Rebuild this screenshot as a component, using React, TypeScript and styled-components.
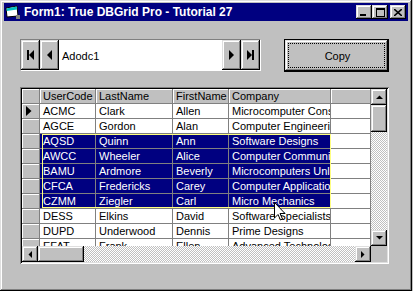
import styled, { createGlobalStyle, css } from "styled-components";

const GlobalStyle = createGlobalStyle`
    html, body {
        margin: 0;
        padding: 0;
        background: #c0c0c0;
    }

    body {
        font-family: "Liberation Sans", Arial, sans-serif;
        font-size: 11px;
        color: #000;
    }
`

interface Customer {
    code: string
    last: string
    first: string
    company: string
}

const customers: Customer[] = [
    { code: "ACMC", last: "Clark", first: "Allen", company: "Microcomputer Consultants" },
    { code: "AGCE", last: "Gordon", first: "Alan", company: "Computer Engineering" },
    { code: "AQSD", last: "Quinn", first: "Ann", company: "Software Designs" },
    { code: "AWCC", last: "Wheeler", first: "Alice", company: "Computer Communications" },
    { code: "BAMU", last: "Ardmore", first: "Beverly", company: "Microcomputers Unlimited" },
    { code: "CFCA", last: "Fredericks", first: "Carey", company: "Computer Applications" },
    { code: "CZMM", last: "Ziegler", first: "Carl", company: "Micro Mechanics" },
    { code: "DESS", last: "Elkins", first: "David", company: "Software Specialists" },
    { code: "DUPD", last: "Underwood", first: "Dennis", company: "Prime Designs" },
    { code: "EFAT", last: "Frank", first: "Ellen", company: "Advanced Technologies" },
];

const columns = ["UserCode", "LastName", "FirstName", "Company"];

// rows 2..6 are the selected block
const isSelected = (index: number) => index >= 2 && index <= 6;

type Direction = "up" | "down" | "left" | "right";

function Arrow({ dir }: { dir: Direction }) {
    const vertical = dir === "up" || dir === "down";
    const points = {
        up: "0,4 7,4 3.5,0.5",
        down: "0,0 7,0 3.5,3.5",
        left: "4,0 4,7 0.5,3.5",
        right: "0,0 0,7 3.5,3.5",
    }[dir];

    return (
        <svg width={vertical ? 7 : 4} height={vertical ? 4 : 7} viewBox={vertical ? "0 0 7 4" : "0 0 4 7"}>
            <polygon points={points} fill="#000" />
        </svg>
    );
}

function NavGlyph({ kind }: { kind: "first" | "prev" | "next" | "last" }) {
    return (
        <svg width="9" height="10" viewBox="0 0 9 10">
            {kind === "first" && <><rect x="1" y="0" width="2" height="10" fill="#000" /><polygon points="8,0 8,10 3,5" fill="#000" /></>}
            {kind === "prev" && <polygon points="7,0 7,10 2,5" fill="#000" />}
            {kind === "next" && <polygon points="2,0 2,10 7,5" fill="#000" />}
            {kind === "last" && <><polygon points="1,0 1,10 6,5" fill="#000" /><rect x="6" y="0" width="2" height="10" fill="#000" /></>}
        </svg>
    );
}

export default function App() {
    return (
        <>
            <GlobalStyle />
            <Window>
                <TitleBar>
                    <svg width="16" height="16" viewBox="0 0 16 16">
                        <polygon points="1,4 12,2 13,12 2,13" fill="#fff" stroke="#000" strokeWidth="1" />
                        <polygon points="1.5,4.4 11.6,2.6 12,5.6 1.8,7" fill="#00c0c0" />
                        <polygon points="11,11 15,11 15,15 11,15" fill="#808080" />
                    </svg>
                    <Title>Form1: True DBGrid Pro - Tutorial 27</Title>
                    <CaptionButtons>
                        <CaptionButton>
                            <svg width="8" height="7" viewBox="0 0 8 7"><rect x="0" y="5" width="6" height="2" fill="#000" /></svg>
                        </CaptionButton>
                        <CaptionButton>
                            <svg width="9" height="9" viewBox="0 0 9 9"><path d="M0 0h9v9H0z M1 2v6h7V2z" fill="#000" fillRule="evenodd" /></svg>
                        </CaptionButton>
                        <CaptionButton $spaced>
                            <svg width="8" height="7" viewBox="0 0 8 7"><path d="M0 0 L8 7 M8 0 L0 7" stroke="#000" strokeWidth="1.6" /></svg>
                        </CaptionButton>
                    </CaptionButtons>
                </TitleBar>

                <Content>
                    <TopRow>
                        <Navigator>
                            <NavButton><NavGlyph kind="first" /></NavButton>
                            <NavButton><NavGlyph kind="prev" /></NavButton>
                            <NavCaption>Adodc1</NavCaption>
                            <NavButton><NavGlyph kind="next" /></NavButton>
                            <NavButton><NavGlyph kind="last" /></NavButton>
                        </Navigator>
                        <CopyButton>
                            <FocusRect>Copy</FocusRect>
                        </CopyButton>
                    </TopRow>

                    <GridFrame>
                        <Cells>
                            <Selector />
                            {columns.map(name => <HeadCell key={name}>{name}</HeadCell>)}
                            <HeadCell />
                            {customers.map((c, i) => (
                                <Row key={c.code}>
                                    <Selector>
                                        {i === 0 && (
                                            <svg width="6" height="10" viewBox="0 0 6 10"><polygon points="0,0 0,10 5.5,5" fill="#000" /></svg>
                                        )}
                                    </Selector>
                                    <DataCell $selected={isSelected(i)}>{c.code}</DataCell>
                                    <DataCell $selected={isSelected(i)}>{c.last}</DataCell>
                                    <DataCell $selected={isSelected(i)}>{c.first}</DataCell>
                                    <DataCell $selected={isSelected(i)}>{c.company}</DataCell>
                                    <DataCell $selected={false} />
                                </Row>
                            ))}
                            <SelectionOutline />
                        </Cells>

                        <VScroll>
                            <ScrollButton><Arrow dir="up" /></ScrollButton>
                            <Thumb $vertical $size={27} />
                            <Track />
                            <ScrollButton><Arrow dir="down" /></ScrollButton>
                        </VScroll>

                        <HScroll>
                            <ScrollButton><Arrow dir="left" /></ScrollButton>
                            <Thumb $size={46} />
                            <Track />
                            <ScrollButton><Arrow dir="right" /></ScrollButton>
                        </HScroll>

                        <Corner />
                    </GridFrame>
                </Content>

                <Cursor width="12" height="19" viewBox="0 0 12 19">
                    <polygon points="0.5,0.5 0.5,16 4,12.5 6.5,18 8.5,17 6,11.5 11,11.5" fill="#fff" stroke="#000" strokeWidth="1" />
                </Cursor>
            </Window>
        </>
    );
}

const raised = css`
    background-color: #c0c0c0;
    box-shadow:
        inset -1px -1px #000,
        inset 1px 1px #dfdfdf,
        inset -2px -2px #808080,
        inset 2px 2px #fff;
`

const dither = css`
    background-color: #fff;
    background-image: repeating-conic-gradient(#c0c0c0 0 25%, #fff 0 50%);
    background-size: 2px 2px;
`

const Window = styled.div`
    position: relative;
    box-sizing: border-box;
    width: 412px;
    height: 291px;
    padding: 3px 4px 4px 4px;

    display: flex;
    flex-direction: column;

    background-color: #c0c0c0;
    box-shadow:
        inset -1px -1px #000,
        inset 1px 1px #dfdfdf,
        inset -2px -2px #808080,
        inset 2px 2px #fff;
`

const TitleBar = styled.div`
    display: flex;
    align-items: center;
    height: 18px;
    padding: 0 2px 0 1px;

    background-color: #000080;
    color: #fff;
`

const Title = styled.span`
    margin-left: 3px;

    font-family: "Liberation Sans", Arial, sans-serif;
    font-size: 12px;
    font-weight: bold;
    white-space: nowrap;
`

const CaptionButtons = styled.div`
    display: flex;
    margin-left: auto;
`

const CaptionButton = styled.div<{ $spaced?: boolean }>`
    ${raised};
    display: flex;
    align-items: center;
    justify-content: center;

    width: 16px;
    height: 14px;
    margin-left: ${({ $spaced }) => $spaced ? "2px" : "0"};
    padding-top: 1px;
    box-sizing: border-box;
`

const Content = styled.div`
    display: flex;
    flex-direction: column;
    padding: 18px 19px 0 16px;
`

const TopRow = styled.div`
    display: flex;
    justify-content: space-between;
    align-items: flex-start;
`

const Navigator = styled.div`
    display: flex;
    box-sizing: border-box;
    width: 241px;
    height: 32px;

    border: 1px solid;
    border-color: #808080 #fff #fff #808080;
    background-color: #fff;
`

const NavButton = styled.div`
    ${raised};
    flex: none;
    display: flex;
    align-items: center;
    justify-content: center;

    width: 19px;
    height: 30px;
`

const NavCaption = styled.div`
    flex: 1;
    display: flex;
    align-items: center;
    padding-left: 3px;
    padding-top: 1px;
`

const CopyButton = styled.div`
    ${raised};
    display: flex;
    box-sizing: border-box;
    width: 105px;
    height: 33px;
    padding: 3px;

    border: 1px solid #000;
`

const FocusRect = styled.div`
    flex: 1;
    display: flex;
    align-items: center;
    justify-content: center;

    border: 1px dotted #000;
    padding-top: 1px;
    padding-left: 2px;
`

const GridFrame = styled.div`
    display: grid;
    grid-template-columns: 1fr 16px;
    grid-template-rows: 1fr 16px;
    box-sizing: border-box;
    width: 369px;
    height: 177px;
    margin-top: 15px;
    padding: 2px;

    background-color: #c0c0c0;
    box-shadow:
        inset 1px 1px #808080,
        inset -1px -1px #fff,
        inset 2px 2px #000,
        inset -2px -2px #dfdfdf;
`

const Cells = styled.div`
    position: relative;
    overflow: hidden;

    display: grid;
    grid-template-columns: 18px 56px 77px 56px 102px 40px;
    grid-auto-rows: 15px;
    align-content: start;

    background-color: #fff;
`

const Row = styled.div`
    display: contents;
`

const cellBase = css`
    box-sizing: border-box;
    overflow: hidden;
    white-space: nowrap;
    padding-left: 3px;
    line-height: 14px;

    border-right: 1px solid #808080;
    border-bottom: 1px solid #808080;
`

const HeadCell = styled.div`
    ${cellBase};
    background-color: #c0c0c0;
    box-shadow: inset 1px 1px #fff;
`

const Selector = styled.div`
    ${cellBase};
    display: flex;
    align-items: center;
    padding-left: 4px;

    background-color: #c0c0c0;
    box-shadow: inset 1px 1px #fff;
`

const DataCell = styled.div<{ $selected: boolean }>`
    ${cellBase};
    background-color: ${({ $selected }) => $selected ? "#000080" : "#fff"};
    color: ${({ $selected }) => $selected ? "#fff" : "#000"};
`

const SelectionOutline = styled.div`
    position: absolute;
    left: 20px;
    top: 45px;
    width: 289px;
    height: 74px;
    box-sizing: border-box;

    border: 1px solid #ffff80;
    pointer-events: none;
`

const VScroll = styled.div`
    display: flex;
    flex-direction: column;
`

const HScroll = styled.div`
    display: flex;
`

const ScrollButton = styled.div`
    ${raised};
    flex: none;
    display: flex;
    align-items: center;
    justify-content: center;

    width: 16px;
    height: 16px;
`

const Thumb = styled.div<{ $vertical?: boolean; $size: number }>`
    ${raised};
    flex: none;
    width: ${({ $vertical, $size }) => $vertical ? "16px" : `${$size}px`};
    height: ${({ $vertical, $size }) => $vertical ? `${$size}px` : "16px"};
`

const Track = styled.div`
    ${dither};
    flex: 1;
`

const Corner = styled.div`
    background-color: #c0c0c0;
`

const Cursor = styled.svg`
    position: absolute;
    left: 274px;
    top: 202px;
`
